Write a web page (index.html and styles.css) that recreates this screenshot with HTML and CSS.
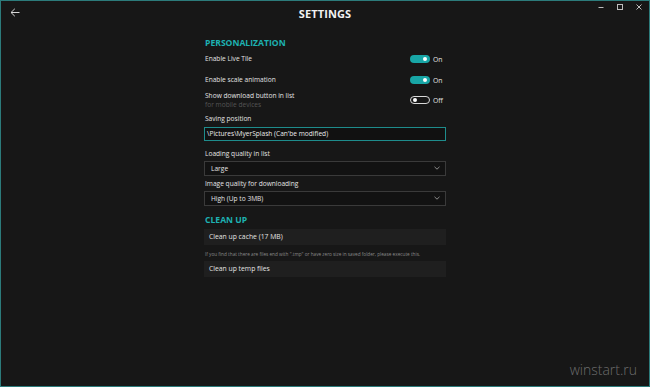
FILE: index.html
```html
<!DOCTYPE html>
<html>
<head>
<meta charset="utf-8">
<link rel="stylesheet" href="styles.css">
</head>
<body>
<div class="window">
  <div class="titlebar">
    <div class="back">
      <svg width="10" height="9" viewBox="0 0 10 9"><path d="M9.5 4.5H1M4.8 0.8L1 4.5L4.8 8.2" fill="none" stroke="#d8d8d8" stroke-width="1"/></svg>
    </div>
    <div class="title">SETTINGS</div>
    <div class="controls">
      <svg width="6" height="6" viewBox="0 0 6 6"><path d="M0.5 3.5H5.5" stroke="#bdbdbd" stroke-width="1"/></svg>
      <svg width="6" height="6" viewBox="0 0 6 6"><rect x="0.5" y="0.5" width="5" height="5" fill="none" stroke="#bdbdbd" stroke-width="1"/></svg>
      <svg width="6" height="6" viewBox="0 0 6 6"><path d="M0.5 0.5L5.5 5.5M5.5 0.5L0.5 5.5" stroke="#bdbdbd" stroke-width="1"/></svg>
    </div>
  </div>
  <div class="content">
    <div class="section-title first">PERSONALIZATION</div>
    <div class="row">
      <div class="label">Enable Live Tile</div>
      <div class="switch"><span class="toggle on"></span><span class="state">On</span></div>
    </div>
    <div class="row second">
      <div class="label">Enable scale animation</div>
      <div class="switch"><span class="toggle on"></span><span class="state">On</span></div>
    </div>
    <div class="row">
      <div class="labels">
        <div class="label">Show download button in list</div>
        <div class="sublabel">for mobile devices</div>
      </div>
      <div class="switch"><span class="toggle off"></span><span class="state">Off</span></div>
    </div>
    <div class="field-label saving">Saving position</div>
    <div class="textbox">\Pictures\MyerSplash (Can'be modified)</div>
    <div class="field-label loading">Loading quality in list</div>
    <div class="select">
      <span>Large</span>
      <svg width="6" height="4" viewBox="0 0 6 4"><path d="M0.5 0.8L3 3.2L5.5 0.8" fill="none" stroke="#9a9a9a" stroke-width="0.9"/></svg>
    </div>
    <div class="field-label image">Image quality for downloading</div>
    <div class="select">
      <span>High (Up to 3MB)</span>
      <svg width="6" height="4" viewBox="0 0 6 4"><path d="M0.5 0.8L3 3.2L5.5 0.8" fill="none" stroke="#9a9a9a" stroke-width="0.9"/></svg>
    </div>
    <div class="section-title clean">CLEAN UP</div>
    <div class="button">Clean up cache (17 MB)</div>
    <div class="hint">If you find that there are files end with ".tmp" or have zero size in saved folder, please execute this.</div>
    <div class="button second">Clean up temp files</div>
  </div>
  <div class="watermark">winstart.ru</div>
</div>
</body>
</html>
```

FILE: styles.css
```css
* { box-sizing: border-box; }
html, body { margin: 0; padding: 0; background: #171717; }
body { font-family: "Open Sans", "Noto Sans", sans-serif; color: #e4e4e4; }

.window {
  position: relative;
  width: 650px;
  height: 387px;
  border: 1px solid #2c7b7b;
  background: #171717;
  overflow: hidden;
}

.titlebar {
  height: 30px;
  display: grid;
  grid-template-columns: 1fr auto 1fr;
  align-items: start;
}
.back { padding: 7px 0 0 9px; height: 20px; }
.back svg { display: block; }
.title {
  font-weight: 700;
  font-size: 11px;
  line-height: 14px;
  padding-top: 6px;
  color: #f2f2f2;
  letter-spacing: 0.1px;
}
.controls {
  justify-self: end;
  display: flex;
  gap: 13px;
  padding: 3px 7px 0 0;
}
.controls svg { display: block; }

.content {
  width: 242px;
  margin: 0 auto;
  display: flex;
  flex-direction: column;
}

.section-title {
  color: #1db1b1;
  font-weight: 700;
  font-size: 8.6px;
  line-height: 11px;
  height: 11px;
  padding-left: 1px;
}
.section-title.first { margin-top: 7px; }
.section-title.clean { margin-top: 9px; }

.row {
  height: 20px;
  display: flex;
  align-items: center;
  justify-content: space-between;
  padding-left: 1px;
}
.row.second { margin-top: 1px; }
.label { font-size: 6.6px; line-height: 8.5px; }
.labels { align-self: flex-start; padding-top: 2px; }
.sublabel { font-size: 6.6px; line-height: 8.5px; color: #555; }

.switch { display: flex; align-items: center; width: 36px; }
.toggle {
  position: relative;
  width: 20px;
  height: 8px;
  border-radius: 4px;
  display: block;
}
.toggle.on { background: #18a6a6; }
.toggle.off { border: 1px solid #d8d8d8; }
.toggle::after {
  content: "";
  position: absolute;
  width: 4px;
  height: 4px;
  border-radius: 50%;
  background: #fff;
  top: 2px;
}
.toggle.on::after { right: 3px; }
.toggle.off::after { left: 2px; top: 1px; }
.state { font-size: 6.8px; margin-left: 3px; color: #e4e4e4; }

.field-label { font-size: 6.6px; line-height: 10px; height: 10px; padding-left: 1px; }
.field-label.saving { margin-top: 4px; }
.field-label.loading { margin-top: 7.5px; }
.field-label.image { margin-top: 3px; }

.textbox {
  margin-top: 3px;
  height: 14px;
  border: 1px solid #1e8c8c;
  background: #111;
  font-size: 6.6px;
  line-height: 12px;
  padding-left: 2px;
  color: #ececec;
}

.select {
  margin-top: 2px;
  height: 15px;
  border: 1px solid #3a3a3a;
  background: #121212;
  display: flex;
  align-items: center;
  justify-content: space-between;
  padding: 0 5px 0 6px;
  font-size: 6.6px;
}

.button {
  margin-top: 3px;
  height: 16px;
  background: #1f1f1f;
  font-size: 6.8px;
  line-height: 16px;
  padding-left: 5px;
}
.hint {
  margin-top: 5px;
  font-size: 4.7px;
  line-height: 8px;
  height: 8px;
  color: #8a8a8a;
  padding-left: 1px;
  white-space: nowrap;
}

.watermark {
  position: absolute;
  right: 12px;
  bottom: 7px;
  font-family: "Open Sans", sans-serif;
  font-weight: 300;
  font-size: 14px;
  color: #6c6c6c;
}
```
